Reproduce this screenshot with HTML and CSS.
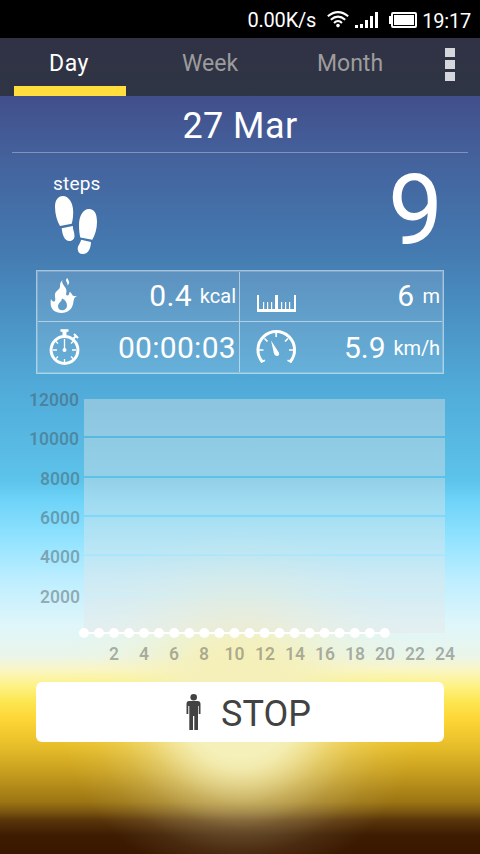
FILE: index.html
```html
<!DOCTYPE html>
<html lang="en">
<head>
<meta charset="utf-8">
<title>Pedometer</title>
<link rel="stylesheet" href="styles.css">
</head>
<body>
<div class="status">
  <span class="rate">0.00K/s</span>
  <svg class="wifi" width="22" height="18" viewBox="0 0 22 18" fill="none" stroke="#fff" stroke-width="2"><path d="M.8 6.200Q11-2 21.200 6.200M3.800 9.700Q11 3.500 18.200 9.700M7 13Q11 8.800 15 13"/><circle cx="11" cy="15.600" r="1.800" fill="#fff" stroke="none"/></svg>
  <svg class="signal" width="24" height="16" viewBox="0 0 24 16" fill="#fff"><path d="M0 13h3v3H0zM5 12h3v4H5zM10 8h3v8h-3zM15 4h3v12h-3zM20 0h3v16h-3z"/></svg>
  <svg class="battery" width="28" height="16" viewBox="0 0 28 16"><path d="M0 4h3v8H0z" fill="#fff"/><rect x="3" y="1" width="24" height="14" rx="1" fill="none" stroke="#fff" stroke-width="2"/><path d="M5 3h20v10H5z" fill="#fff"/></svg>
  <span class="clock">19:17</span>
</div>
<nav class="tabs">
  <div class="tab active">Day</div>
  <div class="tab">Week</div>
  <div class="tab">Month</div>
  <div class="more"><i></i><i></i><i></i></div>
</nav>
<main class="page">
  <h1 class="date">27 Mar</h1>
  <section class="steps">
    <div class="steps-label">
      <span>steps</span>
      <svg width="43" height="60" viewBox="0 0 43 60" fill="#fff"><path d="M8 0C13 0 18.200 6 18.200 16 18.200 21 17.500 25 16.700 27.800L5 30C2 25 0 18 0 11 0 4 3 0 8 0zM6.700 32.300L17.800 30C17.800 34 19.500 36 19.500 40 19.500 43.500 17 45 14.500 45 9 45 7.300 38 6.700 32.300zM34 13C28 13 24 20 24 29 24 34 24.500 38 25.300 41.500L37.300 43.800C40 39 42 33 42 26 42 18 39.500 13 34 13zM26 43.700L36 46C35.800 52 33.500 58 28 58 24.500 58 22.700 56 22.700 53 22.700 49 25.800 47 26 43.700z"/></svg>
    </div>
    <div class="count">9</div>
  </section>
  <section class="stats">
    <div class="stat">
      <svg class="flame" width="27" height="36" viewBox="0 0 27 36" fill="#fff"><path fill-rule="evenodd" d="M12.500 2c-2 4 4.500 7 4 11.500-.3 2-.8 3 .2 3.800 1.500 1 3-1.200 2.800-3.500 2.500 1 2.300 4 4.500 4.300l3 .2c-3 1-3 3-3.700 6.500C22.300 31.500 17.500 35 11.500 35 5 35 .7 31 .7 26c0-2-.2-3.500.3-5 1 2 2 2.700 3.500 2.500 2-2-.5-5 .8-8.500 1.500-3 4.700-3.500 4.700-7C10 5.500 10.500 4 12.500 2zM12 20.500c0 3-4 4.500-4 7.500s1.700 4.300 4.200 4.300 4.800-1.800 4.800-4.800-2-6-5-7z"/><path d="M17.300 0c-3.300 3.200.8 3.800.2 7.500 2.800-2.500 1.500-4.200-.2-7.500z"/></svg>
      <b>0.4</b><small>kcal</small>
    </div>
    <div class="stat">
      <svg class="ruler" width="40" height="18" viewBox="0 0 40 18" fill="#fff"><path d="M0 1h2v14h16V1h3v14h16V1h2v17H0z"/><path d="M6 8h1.200v7H6zM10 8h1.200v7H10zM14 8h1.200v7H14zM24 8h1.200v7h-1.200zM28 8h1.200v7h-1.200zM32 8h1.200v7h-1.200z"/></svg>
      <b>6</b><small>m</small>
    </div>
    <div class="stat">
      <svg class="timer" width="32" height="36" viewBox="0 0 32 36" fill="none" stroke="#fff"><circle cx="15.500" cy="21" r="13.400" stroke-width="3"/><path d="M11.500 1.500h8" stroke-width="2.600"/><path d="M15.500 2v6" stroke-width="4"/><path d="M24 10l3-3M25 5l4 4" stroke-width="2"/><path d="M15.500 10v11M4 21h4M23 21h4M15.500 30v3M7 12.500l2 2M24 12.500l-2 2M7 29.500l2-2M24 29.500l-2-2" stroke-width="1.300"/><circle cx="15.500" cy="21" r="2" fill="#fff" stroke="none"/></svg>
      <b>00:00:03</b>
    </div>
    <div class="stat">
      <svg class="gauge" width="41" height="34" viewBox="0 0 41 34" fill="none" stroke="#fff"><path d="M6.500 32A18.300 18.300 0 1 1 34 32" stroke-width="3"/><path d="M20.200 2v5M2 20h5.500M33 20h5.500M8.500 8.500l3 3M32 8.500l-3 3M5 32.300l4-2M35.500 32.300l-4-2" stroke-width="1.700"/><path d="M15 10.500l7.800 12c1 2-.2 3.500-1.800 3.500s-2.500-1-3-2.500z" fill="#fff" stroke="none"/></svg>
      <b>5.9</b><small>km/h</small>
    </div>
  </section>
  <svg class="chart" width="480" height="280" viewBox="0 390 480 280">
    <path class="bands" d="M84 399h361v37H84zM84 438h361v38H84zM84 478h361v37H84zM84 517h361v37.500H84zM84 556h361v38H84zM84 595.500h361V633H84z"/>
    <g class="axis y">
      <text x="79" y="406">12000</text><text x="79" y="445">10000</text><text x="80" y="485">8000</text><text x="80" y="524">6000</text><text x="80" y="563">4000</text><text x="80" y="603">2000</text>
    </g>
    <g class="axis x">
      <text x="114" y="660">2</text><text x="144" y="660">4</text><text x="174" y="660">6</text><text x="204" y="660">8</text><text x="234.500" y="660">10</text><text x="265" y="660">12</text><text x="295" y="660">14</text><text x="325" y="660">16</text><text x="355" y="660">18</text><text x="385" y="660">20</text><text x="415" y="660">22</text><text x="445" y="660">24</text>
    </g>
    <path d="M84 633h301" stroke="#fff" stroke-width="2"/>
    <path class="dots" d="M84 633h0M99 633h0M114 633h0M129 633h0M144 633h0M159 633h0M174.300 633h0M189.300 633h0M204.300 633h0M219.300 633h0M234.500 633h0M249.500 633h0M264.500 633h0M279.500 633h0M294.600 633h0M309.600 633h0M324.600 633h0M339.600 633h0M354.800 633h0M369.800 633h0M384.800 633h0"/>
  </svg>
  <button class="stop">
    <svg width="15" height="36" viewBox="0 0 15 36" fill="#424242"><circle cx="7.700" cy="3.300" r="3.300"/><path d="M3 7h8.500q3 0 3 3v10h-1.800v-8H12v24H8.300V22H7v14H3.300V12h-1v8H.5V10Q.5 7 3 7z"/></svg>
    <span>STOP</span>
  </button>
</main>
</body>
</html>
```
FILE: styles.css
```css
* { box-sizing: border-box; }
body {
  margin: 0;
  width: 480px;
  height: 854px;
  overflow: hidden;
  font-family: Roboto, "Liberation Sans", sans-serif;
  color: #fff;
}
.status {
  height: 38px;
  background: #000;
  display: flex;
  align-items: center;
  padding: 2px 9px 0 0;
  justify-content: flex-end;
  font-size: 20px;
}
.rate { letter-spacing: -.2px; margin-right: 11px; }
.wifi { margin: -2px 6px 0 0; }
.signal { margin-right: 10px; }
.battery { margin-right: 5px; }
.clock { font-size: 20px; letter-spacing: -.2px; padding-top: 2px; }
.tabs {
  height: 58px;
  background: linear-gradient(#313245, #2e3544);
  display: flex;
  padding-left: 14px;
  font-size: 23px;
}
.tab {
  width: 112px;
  margin-right: 28px;
  height: 58px;
  line-height: 51px;
  text-align: center;
  color: #9c9c9d;
}
.tab.active { color: #fff; border-bottom: 10px solid #ffde3e; letter-spacing: .5px; padding-right: 2px; }
.more { display: flex; flex-direction: column; gap: 3px; padding-top: 10px; margin-left: 11px; }
.more i { width: 10px; height: 9px; background: #d6d7dc; }
.page {
  height: 758px;
  display: flex;
  flex-direction: column;
  background:
    radial-gradient(circle 180px at 240px 610px, #f5f0ba 0%, #f5f0ba 28%, rgba(245,240,186,.93) 34%, rgba(245,240,186,.72) 43%, rgba(245,240,186,.43) 55%, rgba(245,240,186,.22) 68%, rgba(245,240,186,.08) 83%, rgba(245,240,186,0) 100%),
    linear-gradient(#414f8b 0, #44609b 56px, #447ab0 154px, #50a8d6 284px, #52aedb 304px, #5dc3ea 384px, #6ed3f8 404px, #92e3ff 444px, #bdeeff 484px, #dff6fa 529px, #eaf5ea 560px, #faf6c4 574px, #fdf285 590px, #fde650 606px, #fdd535 624px, #e8bf2a 649px, #c9a01f 675px, #9c7514 706px, #7a5510 716px, #5a350a 724px, #3d1c02 739px, #3a1700 758px);
}
.date {
  margin: 0 12px;
  height: 57px;
  border-bottom: 1px solid rgba(255,255,255,.32);
  font-size: 36px;
  font-weight: 400;
  line-height: 60px;
  text-align: center;
  letter-spacing: .4px;
}
.steps { height: 117px; padding: 0 37px 0 53px; display: flex; justify-content: space-between; }
.steps-label { display: flex; flex-direction: column; font-size: 19px; line-height: 22px; padding-top: 20px; letter-spacing: .2px; }
.steps-label svg { margin: 1px 0 0 2px; }
.count { font-size: 98px; line-height: 115px; }
.stats {
  margin: 0 36px;
  height: 104px;
  padding: 1px;
  border: 1px solid rgba(255,255,255,.45);
  box-shadow: inset 0 0 0 1px rgba(255,255,255,.2);
  background: rgba(255,255,255,.13);
  display: grid;
  grid-template: 50px 50px / 202px 202px;
}
.stat { display: flex; align-items: center; padding: 0 2px 0 12px; }
.stat:nth-child(odd) { border-right: 1px solid rgba(255,255,255,.5); padding-right: 3px; }
.stat:nth-child(-n+2) { border-bottom: 1px solid rgba(255,255,255,.5); }
.flame { margin-top: -2px; }
.timer { margin-left: -1px; }
.ruler { margin: 13px 0 0 5px; }
.gauge { margin-left: 4px; }
.stat b { margin: 0 0 0 auto; font-size: 30px; font-weight: 400; letter-spacing: .3px; }
.stat:nth-child(-n+2) b, .stat:nth-child(-n+2) small { margin-top: -2px; }
.stat small { margin-left: 8px; font-size: 20px; }
.stat:nth-child(4) b { letter-spacing: -.1px; }
.stat:nth-child(4) small { margin-top: 1px; letter-spacing: -.1px; }
.chart { margin-top: 16px; flex: none; }
.bands { fill: rgba(230,230,230,.4); }
.axis { font-size: 17.5px; font-weight: 600; fill: rgba(65,70,72,.42); }
.axis.y { text-anchor: end; }
.axis.x { text-anchor: middle; }
.dots { stroke: #fff; stroke-width: 10px; stroke-linecap: round; }
.stop {
  margin: 12px 36px 0;
  height: 60px;
  padding: 0 0 0 17px;
  border: 0;
  border-radius: 6px;
  background: #fff;
  color: #424242;
  display: flex;
  align-items: center;
  justify-content: center;
  gap: 20px;
  font: 36px Roboto, "Liberation Sans", sans-serif;
}
.stop span { padding-top: 3px; }
```
